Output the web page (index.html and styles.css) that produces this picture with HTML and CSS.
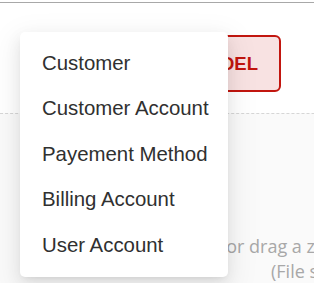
FILE: index.html
```html
<!DOCTYPE html>
<html>
<head>
<meta charset="utf-8">
<link rel="stylesheet" href="styles.css">
</head>
<body>
<div class="topline"></div>
<div class="toolbar">
  <button class="model-btn">NEW MODEL</button>
</div>
<div class="dropzone">
  <p class="hint hint-main">Click or drag a zip file to this area to upload</p>
  <p class="hint hint-sub">(File size should not exceed 10MB)</p>
</div>
<ul class="menu">
  <li class="menu-item">Customer</li>
  <li class="menu-item">Customer Account</li>
  <li class="menu-item">Payement Method</li>
  <li class="menu-item">Billing Account</li>
  <li class="menu-item">User Account</li>
</ul>
</body>
</html>
```
FILE: styles.css
```css
html, body {
  margin: 0;
  padding: 0;
  background: #ffffff;
  overflow: hidden;
  width: 314px;
  height: 283px;
}
body {
  font-family: "Liberation Sans", Arial, sans-serif;
  position: relative;
}
.topline {
  height: 2px;
  border-bottom: 1px solid #a8a8a8;
}
.toolbar {
  height: 110px;
  box-sizing: border-box;
  display: flex;
  justify-content: flex-end;
  align-items: flex-start;
  padding-top: 32px;
  padding-right: 33px;
}
.model-btn {
  height: 57px;
  box-sizing: border-box;
  border: 2px solid #c2160f;
  border-radius: 6px;
  background: #f8e2e2;
  color: #c2160f;
  font-family: "Liberation Sans", Arial, sans-serif;
  font-weight: bold;
  font-size: 18.5px;
  padding: 0 21px;
  white-space: nowrap;
  flex-shrink: 0;
}
.dropzone {
  margin-left: -10px;
  width: 420px;
  height: 200px;
  border-top: 1px dashed #d6d6d6;
  background: #fafafa;
  padding-top: 120px;
  box-sizing: border-box;
}
.hint {
  margin: 0;
  font-family: "Open Sans", sans-serif;
  font-size: 18px;
  line-height: 25px;
  color: #a8a8a8;
  white-space: nowrap;
}
.hint-main {
  margin-left: 193px;
}
.hint-sub {
  margin-left: 281px;
}
.menu {
  position: absolute;
  top: 32px;
  left: 20px;
  width: 208px;
  margin: 0;
  padding: 8.5px 0;
  list-style: none;
  background: #ffffff;
  border-radius: 5px;
  box-shadow: 0 3px 6px -4px rgba(0,0,0,0.12), 0 6px 16px 0 rgba(0,0,0,0.08), 0 9px 28px 8px rgba(0,0,0,0.05);
}
.menu-item {
  padding: 7px 22px;
  font-size: 20.4px;
  line-height: 31.5px;
  color: #303030;
  white-space: nowrap;
}
```
